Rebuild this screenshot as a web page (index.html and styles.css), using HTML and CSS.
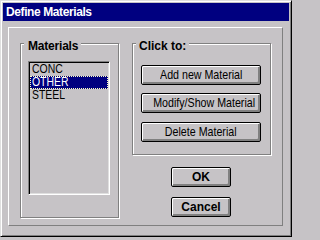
FILE: index.html
```html
<!DOCTYPE html>
<html>
<head>
<meta charset="utf-8">
<link rel="stylesheet" href="styles.css">
</head>
<body>
<div class="window">
  <div class="titlebar">Define Materials</div>
  <div class="panel">
    <div class="group group-materials">
      <span class="legend">Materials</span>
      <div class="listbox">
        <div class="item"><span class="narrow">CONC</span></div>
        <div class="item selected"><span class="narrow">OTHER</span></div>
        <div class="item"><span class="narrow">STEEL</span></div>
      </div>
    </div>
    <div class="right-col">
      <div class="group group-click">
        <span class="legend">Click to:</span>
        <button class="btn btn-add"><span class="narrow">Add new Material</span></button>
        <button class="btn btn-modify"><span class="narrow">Modify/Show Material</span></button>
        <button class="btn btn-delete"><span class="narrow">Delete Material</span></button>
      </div>
      <button class="btn btn-bold btn-ok">OK</button>
      <button class="btn btn-bold btn-cancel">Cancel</button>
    </div>
  </div>
</div>
</body>
</html>
```
FILE: styles.css
```css
html, body {
  margin: 0;
  padding: 0;
  background: #c6c3c6;
}
.window {
  box-sizing: border-box;
  width: 292px;
  height: 237px;
  background: #c6c3c6;
  border: 1px solid;
  border-color: #dfdfdf #000 #000 #dfdfdf;
  box-shadow: inset 1px 1px #fff, inset -1px -1px #808080;
  padding: 2px;
  font-family: "Liberation Sans", Arial, sans-serif;
}
.titlebar {
  box-sizing: border-box;
  height: 18px;
  padding: 1px 0 0 3px;
  line-height: 17px;
  background: #000080;
  color: #fff;
  font-weight: bold;
  font-size: 12px;
  letter-spacing: -0.4px;
  white-space: nowrap;
}
.panel {
  box-sizing: border-box;
  width: 275px;
  height: 199px;
  margin: 6px 0 0 5px;
  border: 1px solid;
  border-color: #fff #808080 #808080 #fff;
  padding: 15px 0 0 11px;
  display: flex;
  align-items: flex-start;
  gap: 13px;
}
.group {
  position: relative;
  box-sizing: border-box;
  border: 1px solid #808080;
  box-shadow: inset 1px 1px #fff, 1px 1px #fff;
}
.legend {
  position: absolute;
  top: -5px;
  left: 3px;
  padding: 0 3px 0 4px;
  background: #c6c3c6;
  font-weight: bold;
  font-size: 12px;
  line-height: 14px;
  letter-spacing: -0.2px;
  white-space: nowrap;
}
.group-click .legend {
  padding: 0 3px 0 3px;
  letter-spacing: 0;
}
.group-materials {
  width: 99px;
  height: 175px;
  padding: 17px 0 0 7px;
}
.listbox {
  box-sizing: border-box;
  width: 82px;
  height: 134px;
  border: 1px solid;
  border-color: #808080 #fff #fff #808080;
  box-shadow: inset 1px 1px #000, inset -1px -1px #dfdfdf;
  padding: 1px;
}
.item {
  height: 13px;
  line-height: 13px;
  padding-left: 2px;
  font-size: 12px;
  color: #000;
  white-space: nowrap;
  overflow: hidden;
}
.narrow {
  display: inline-block;
  transform: scaleX(0.87);
  transform-origin: 0 50%;
}
.item.selected {
  background: #000080;
  color: #fff;
  outline: 1px dotted #ffffc0;
  outline-offset: -1px;
}
.right-col {
  display: flex;
  flex-direction: column;
  align-items: flex-start;
}
.group-click {
  width: 139px;
  height: 112px;
  padding: 21px 0 0 8px;
  display: flex;
  flex-direction: column;
}
.btn {
  box-sizing: border-box;
  width: 120px;
  height: 20px;
  margin: 0;
  padding: 0 0 1px 0;
  border: 1px solid #000;
  border-radius: 2px;
  background: #c6c3c6;
  box-shadow: inset 1px 1px #fff, inset -2px -2px #808080;
  font-family: "Liberation Sans", Arial, sans-serif;
  font-size: 13px;
  line-height: 17px;
  color: #000;
  text-align: center;
  white-space: nowrap;
}
.btn .narrow {
  transform: scaleX(0.82);
  transform-origin: 50% 50%;
}
.btn-modify {
  margin-top: 8px;
}
.btn-delete {
  margin-top: 9px;
}
.btn-bold {
  width: 60px;
  font-size: 12px;
  font-weight: bold;
  line-height: 18px;
  padding: 0;
  margin-left: 39px;
}
.btn-ok {
  margin-top: 12px;
}
.btn-cancel {
  margin-top: 10px;
}
```
